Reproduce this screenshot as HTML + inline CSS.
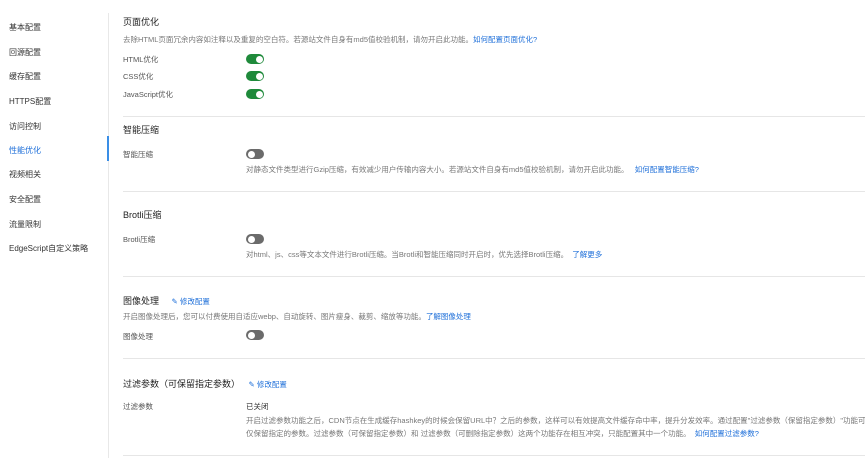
<!DOCTYPE html>
<html><head><meta charset="utf-8"><style>
body{margin:0;width:865px;height:458px;background:#fff;font-family:"Liberation Sans","Noto Sans CJK SC",sans-serif;color:#333;position:relative;overflow:hidden}
.a{position:absolute;white-space:nowrap;line-height:1}
.nav{left:9px;font-size:8px;color:#333}
.h{left:123px;font-size:9px;color:#222}
.l{left:123px;font-size:7.5px;color:#555}
.d{font-size:7.5px;color:#777}
.b{color:#1e6fd9}
.line{position:absolute;left:123px;right:0;height:1px;background:#e6e6e6}
.t{position:absolute;left:246px;width:18px;height:10px;border-radius:5px}
.t:after{content:"";position:absolute;top:1.5px;width:7px;height:7px;border-radius:50%;background:#fff}
.on{background:#1f8a3b}.on:after{left:9.5px}
.off{background:#6b6b6b}.off:after{left:1.5px}
</style></head><body>
<div style="position:absolute;left:108px;top:13px;width:1px;height:445px;background:#e8e8e8"></div>
<div style="position:absolute;left:107px;top:136px;width:2px;height:25px;background:#3a8ee6"></div>
<div class="a nav" style="top:24px">基本配置</div>
<div class="a nav" style="top:49px">回源配置</div>
<div class="a nav" style="top:73px">缓存配置</div>
<div class="a nav" style="top:98px">HTTPS配置</div>
<div class="a nav" style="top:123px">访问控制</div>
<div class="a nav b" style="top:147px">性能优化</div>
<div class="a nav" style="top:171px">视频相关</div>
<div class="a nav" style="top:196px">安全配置</div>
<div class="a nav" style="top:221px">流量限制</div>
<div class="a nav" style="top:245px">EdgeScript自定义策略</div>

<div class="a h" style="top:18px">页面优化</div>
<div class="a d" style="left:123px;top:36px">去除HTML页面冗余内容如注释以及重复的空白符。若源站文件自身有md5值校验机制，请勿开启此功能。<span class="b">如何配置页面优化?</span></div>
<div class="a l" style="top:56px">HTML优化</div><div class="t on" style="top:54px"></div>
<div class="a l" style="top:73px">CSS优化</div><div class="t on" style="top:71px"></div>
<div class="a l" style="top:91px">JavaScript优化</div><div class="t on" style="top:89px"></div>
<div class="line" style="top:116px"></div>

<div class="a h" style="top:126px">智能压缩</div>
<div class="a l" style="top:151px">智能压缩</div><div class="t off" style="top:149px"></div>
<div class="a d" style="left:246px;top:166px">对静态文件类型进行Gzip压缩，有效减少用户传输内容大小。若源站文件自身有md5值校验机制，请勿开启此功能。&nbsp;&nbsp;&nbsp;<span class="b">如何配置智能压缩?</span></div>
<div class="line" style="top:191px"></div>

<div class="a h" style="top:211px">Brotli压缩</div>
<div class="a l" style="top:236px">Brotli压缩</div><div class="t off" style="top:234px"></div>
<div class="a d" style="left:246px;top:251px">对html、js、css等文本文件进行Brotli压缩。当Brotli和智能压缩同时开启时，优先选择Brotli压缩。&nbsp;&nbsp;<span class="b">了解更多</span></div>
<div class="line" style="top:276px"></div>

<div class="a h" style="top:297px">图像处理 <span class="b" style="font-size:7.5px;margin-left:10px">✎ 修改配置</span></div>
<div class="a d" style="left:123px;top:313px">开启图像处理后，您可以付费使用自适应webp、自动旋转、图片瘦身、裁剪、缩放等功能。<span class="b">了解图像处理</span></div>
<div class="a l" style="top:333px">图像处理</div><div class="t off" style="top:330px"></div>
<div class="line" style="top:358px"></div>

<div class="a h" style="top:380px">过滤参数（可保留指定参数） <span class="b" style="font-size:7.5px;margin-left:6px">✎ 修改配置</span></div>
<div class="a l" style="top:403px">过滤参数</div>
<div class="a" style="left:246px;top:403px;font-size:7.5px;color:#333">已关闭</div>
<div class="a d" style="left:246px;top:417px">开启过滤参数功能之后，CDN节点在生成缓存hashkey的时候会保留URL中？之后的参数，这样可以有效提高文件缓存命中率，提升分发效率。通过配置"过滤参数（保留指定参数）"功能可以选择</div>
<div class="a d" style="left:246px;top:430px">仅保留指定的参数。过滤参数（可保留指定参数）和 过滤参数（可删除指定参数）这两个功能存在相互冲突，只能配置其中一个功能。&nbsp;&nbsp;<span class="b">如何配置过滤参数?</span></div>
<div class="line" style="top:455px"></div>
</body></html>
